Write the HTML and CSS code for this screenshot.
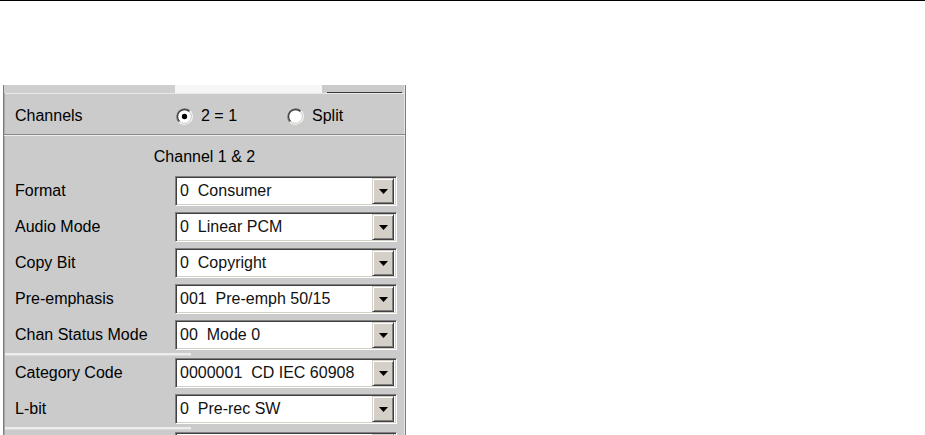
FILE: index.html
```html
<!DOCTYPE html>
<html>
<head>
<meta charset="utf-8">
<title>Channel Status</title>
<link rel="stylesheet" href="styles.css">
</head>
<body>
<div class="topline"></div>
<div class="panel">
  <div class="strip">
    <span class="s-gray"></span><span class="s-white"></span><span class="s-gap"></span><span class="s-dark"></span>
  </div>
  <div class="strip-line"></div>
  <div class="row channels">
    <span class="label">Channels</span>
    <span class="opt opt-first">
      <svg class="radio" width="17" height="17" viewBox="0 0 16 16">
        <circle cx="8" cy="8" r="7" fill="#fff"/>
        <path d="M2.7 13.3 A7.5 7.5 0 0 1 13.3 2.7" fill="none" stroke="#7a7a7a" stroke-width="1.1"/>
        <path d="M13.3 2.7 A7.5 7.5 0 0 1 2.7 13.3" fill="none" stroke="#fff" stroke-width="1.1"/>
        <path d="M3.4 12.6 A6.5 6.5 0 0 1 12.6 3.4" fill="none" stroke="#303030" stroke-width="1.1"/>
        <path d="M12.6 3.4 A6.5 6.5 0 0 1 3.4 12.6" fill="none" stroke="#d4d0c8" stroke-width="1.1"/>
        <circle cx="8" cy="8" r="2.5" fill="#000"/>
      </svg>
      <span class="opt-text">2 = 1</span>
    </span>
    <span class="opt">
      <svg class="radio" width="17" height="17" viewBox="0 0 16 16">
        <circle cx="8" cy="8" r="7" fill="#fff"/>
        <path d="M2.7 13.3 A7.5 7.5 0 0 1 13.3 2.7" fill="none" stroke="#7a7a7a" stroke-width="1.1"/>
        <path d="M13.3 2.7 A7.5 7.5 0 0 1 2.7 13.3" fill="none" stroke="#fff" stroke-width="1.1"/>
        <path d="M3.4 12.6 A6.5 6.5 0 0 1 12.6 3.4" fill="none" stroke="#303030" stroke-width="1.1"/>
        <path d="M12.6 3.4 A6.5 6.5 0 0 1 3.4 12.6" fill="none" stroke="#d4d0c8" stroke-width="1.1"/>
      </svg>
      <span class="opt-text">Split</span>
    </span>
  </div>
  <div class="sep"></div>
  <div class="title">Channel 1 &amp; 2</div>

  <div class="row">
    <span class="label">Format</span>
    <div class="combo"><span class="val">0  Consumer</span><span class="btn"><svg width="9" height="5" viewBox="0 0 9 5"><polygon points="0,0 9,0 4.5,5" fill="#000"/></svg></span></div>
  </div>
  <div class="row">
    <span class="label">Audio Mode</span>
    <div class="combo"><span class="val">0  Linear PCM</span><span class="btn"><svg width="9" height="5" viewBox="0 0 9 5"><polygon points="0,0 9,0 4.5,5" fill="#000"/></svg></span></div>
  </div>
  <div class="row">
    <span class="label">Copy Bit</span>
    <div class="combo"><span class="val">0  Copyright</span><span class="btn"><svg width="9" height="5" viewBox="0 0 9 5"><polygon points="0,0 9,0 4.5,5" fill="#000"/></svg></span></div>
  </div>
  <div class="row">
    <span class="label">Pre-emphasis</span>
    <div class="combo"><span class="val">001  Pre-emph 50/15</span><span class="btn"><svg width="9" height="5" viewBox="0 0 9 5"><polygon points="0,0 9,0 4.5,5" fill="#000"/></svg></span></div>
  </div>
  <div class="row">
    <span class="label">Chan Status Mode</span>
    <div class="combo"><span class="val">00  Mode 0</span><span class="btn"><svg width="9" height="5" viewBox="0 0 9 5"><polygon points="0,0 9,0 4.5,5" fill="#000"/></svg></span></div>
  </div>
  <div class="group-sep"></div>
  <div class="row">
    <span class="label">Category Code</span>
    <div class="combo"><span class="val">0000001  CD IEC 60908</span><span class="btn"><svg width="9" height="5" viewBox="0 0 9 5"><polygon points="0,0 9,0 4.5,5" fill="#000"/></svg></span></div>
  </div>
  <div class="row">
    <span class="label">L-bit</span>
    <div class="combo"><span class="val">0  Pre-rec SW</span><span class="btn"><svg width="9" height="5" viewBox="0 0 9 5"><polygon points="0,0 9,0 4.5,5" fill="#000"/></svg></span></div>
  </div>
  <div class="group-sep"></div>
  <div class="row">
    <span class="label"></span>
    <div class="combo"><span class="val"></span><span class="btn"></span></div>
  </div>
</div>
</body>
</html>
```
FILE: styles.css
```css
html, body {
  margin: 0;
  padding: 0;
  background: #fff;
  overflow: hidden;
}
body {
  width: 925px;
  height: 435px;
  font-family: "Liberation Sans", Arial, sans-serif;
  font-size: 16px;
  color: #000;
}
.topline {
  height: 1px;
  background: #000;
}
.panel {
  margin: 84px 0 0 3px;
  width: 403px;
  height: 350px;
  overflow: hidden;
  box-sizing: border-box;
  background: #cbcbcb;
  border-left: 1px solid #7a7a7a;
  border-right: 1px solid #7c7c7c;
  box-shadow: inset 1px 0 0 #a9a9a9, inset -1px 0 0 #e6e6e6;
}
.strip {
  display: flex;
  height: 8px;
}
.s-gray {
  width: 171px;
  background: #cfcfcf;
}
.s-white {
  width: 147px;
  background: #f6f6f6;
}
.s-gap {
  width: 5px;
}
.s-dark {
  width: 75px;
  box-sizing: border-box;
  border-bottom: 1px solid #3a3a3a;
}
.strip-line {
  height: 1px;
  margin-left: 1px;
  background: #e9e9e9;
}
.row {
  display: flex;
  align-items: center;
  height: 36px;
  padding-left: 11px;
}
.row.channels {
  height: 40px;
  box-sizing: border-box;
  padding-top: 3px;
}
.label {
  width: 160px;
  flex: 0 0 160px;
  white-space: nowrap;
}
.opt {
  display: flex;
  align-items: center;
}
.opt-first {
  width: 111px;
  margin-left: 1px;
}
.radio {
  display: block;
  margin-right: 8px;
  margin-top: 2px;
}
.opt-text {
  margin-top: 1px;
}
.sep {
  height: 1px;
  background: #8a8a8a;
  box-shadow: 0 1px 0 #eeeeee;
  margin-bottom: 1px;
}
.title {
  height: 37px;
  box-sizing: border-box;
  padding-top: 4px;
  display: flex;
  align-items: center;
  justify-content: center;
}
.group-sep {
  height: 2px;
  width: 186px;
  margin-left: 1px;
  background: #ededed;
  box-shadow: 0 1px 0 #d9d9d9;
}
.combo {
  width: 222px;
  height: 30px;
  box-sizing: border-box;
  display: flex;
  align-items: center;
  background: #fff;
  border: 1px solid;
  border-color: #808080 #ffffff #ffffff #808080;
  box-shadow: inset 1px 1px 0 #404040, inset -1px -1px 0 #d4d0c8;
  padding: 2px;
}
.val {
  flex: 1;
  padding-left: 2px;
  white-space: pre;
  color: #111;
}
.btn {
  width: 22px;
  height: 26px;
  flex: 0 0 22px;
  box-sizing: border-box;
  background: #d4d0c8;
  border: 1px solid;
  border-color: #d4d0c8 #404040 #404040 #d4d0c8;
  box-shadow: inset 1px 1px 0 #ffffff, inset -1px -1px 0 #808080;
  display: flex;
  align-items: center;
  justify-content: center;
}
.btn svg {
  display: block;
  margin-top: 1px;
}
```
